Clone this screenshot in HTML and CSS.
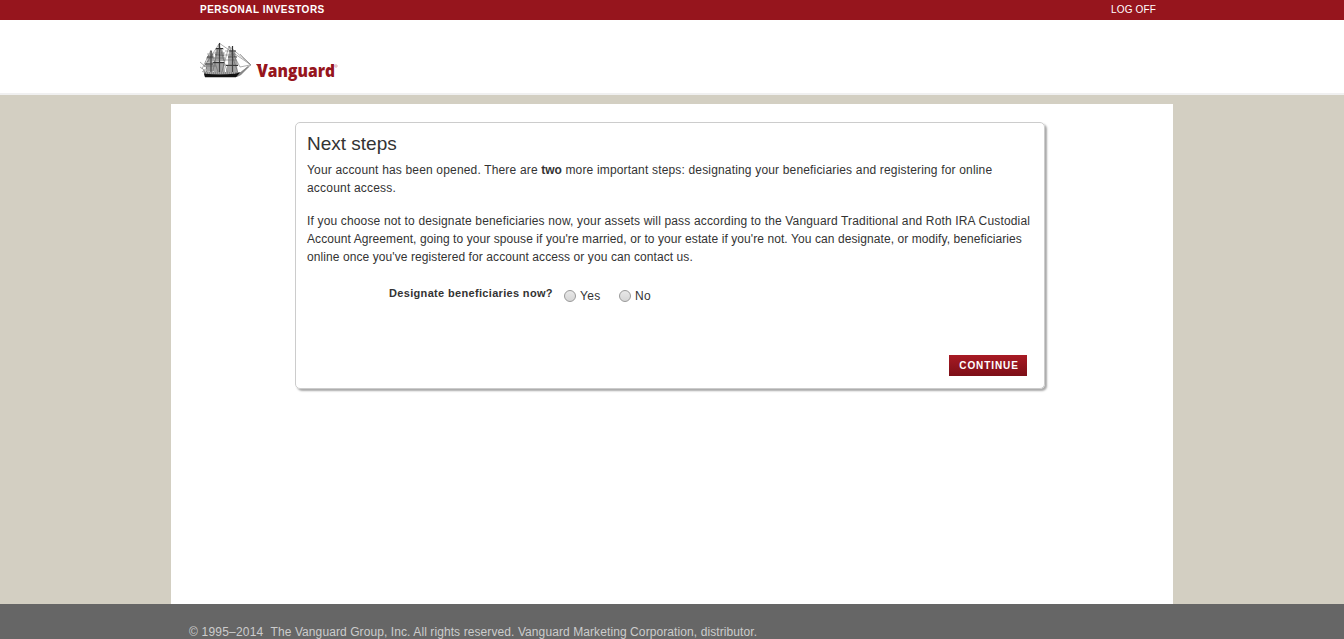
FILE: index.html
```html
<!DOCTYPE html>
<html lang="en">
<head>
<meta charset="utf-8">
<title>Vanguard - Next steps</title>
<link rel="stylesheet" href="styles.css">
</head>
<body>
<div class="topbar"><div class="topbar-inner"><span class="section">PERSONAL INVESTORS</span><a class="logoff">LOG OFF</a></div></div>
<header class="header">
<svg class="logo" width="150" height="52" viewBox="198 39 150 52" role="img" aria-label="Vanguard">
<g fill="none" stroke="#777" stroke-width=".6">
<path d="M219 43L251 65L237 75M229 46L251 65M211 50L202 69M219 44L204 67M219 44L212 75M229 46L221 75M219 44L228 75M229 46L239 76M211 50L219 75M240 54L250 64M229 46L240 67L250 65M200 62L207 68L202 72M200 67L207 72"/>
<path d="M207 54h7M206 58h9M205 62h10M204 66h12M215 49h9M214 53h11M214 58h11M213 63h12M225 51h9M224 55h11M224 60h12M223 65h13"/>
</g>
<g stroke="#333" fill="none">
<path stroke-width="1.2" d="M211 51V75M219.500 43V75M232.500 46V75"/>
<path stroke-width="1.200" d="M216 48.500h7M215 55h9M213 62.500h11M229 51h7M228 57h9M226 65.500h12M207 57h6M205 64h8"/>
</g>
<g fill="#555" opacity=".55"><path d="M208 55l5-1 1 7-7 1zM206 63l8-1 2 9-10 1zM216 49l6 0 2 5-9 1zM215 56l9-1 1 6-11 1zM214 63l10 0 1 9-11 1zM229 52l6-1 1 6-8 1zM228 58l8 0 2 7-10 1zM227 66l10 0 1 7-12 0z"/></g>
<path fill="#888" d="M203 70l3 2h35l7-6 1 1-8 8-4 2h-32z"/>
<path fill="#111" d="M204 73.500q15 2 32 0l4-1-4 4.800h-31z"/>
<path d="M206 73h30" stroke="#ddd" stroke-width=".7" stroke-dasharray="1 1"/>
<path class="wordmark-serif" d="M256 64h5v1.500h-4z"/>
<text class="wordmark" x="257" y="77" textLength="78" lengthAdjust="spacingAndGlyphs">Vanguard</text>
<circle cx="336" cy="66" r="1.200" fill="none" stroke="#d48c91" stroke-width=".7"/>
</svg>
</header>
<main class="page">
<section class="card">
<h1>Next steps</h1>
<p><span class="l1">Your account has been opened. There are <b>two</b> more important steps: designating your beneficiaries and registering for online</span><span class="l2">account access.</span></p>
<p><span class="l3">If you choose not to designate beneficiaries now, your assets will pass according to the Vanguard Traditional and Roth IRA Custodial</span><span class="l4">Account Agreement, going to your spouse if you're married, or to your estate if you're not. You can designate, or modify, beneficiaries</span><span class="l5">online once you've registered for account access or you can contact us.</span></p>
<div class="question"><span class="label">Designate beneficiaries now?</span><label class="choice"><i class="radio"></i><span>Yes</span></label><label class="choice"><i class="radio"></i><span>No</span></label></div>
<div class="actions"><button class="continue">CONTINUE</button></div>
</section>
</main>
<footer class="footer"><span class="years">© 1995–2014&nbsp; </span>The Vanguard Group, Inc. All rights reserved. Vanguard Marketing Corporation, distributor.</footer>
</body>
</html>
```
FILE: styles.css
```css
* { box-sizing: border-box; }
body { margin: 0; height: 639px; overflow: hidden; display: flex; flex-direction: column; background: #d3cfc2; font: 12px/18px "Liberation Sans", Arial, sans-serif; color: #333; }
.topbar { height: 20px; flex: none; background: #96151d; color: #fff; }
.topbar-inner { display: flex; justify-content: space-between; padding: 0 188px 0 200px; font-size: 10px; line-height: 19px; }
.section { font-weight: bold; letter-spacing: .5px; }
.logoff { letter-spacing: .15px; }
.header { height: 75px; flex: none; background: #fff; border-bottom: 2px solid #f0f0f0; padding: 19px 0 0 198px; }
.logo { display: block; overflow: visible; }
.wordmark { font: 800 17px "Open Sans", sans-serif; fill: #96151d; }
.wordmark-serif { fill: #96151d; }
.page { width: 1002px; height: 500px; flex: none; margin: 9px 0 0 171px; padding: 18px 0 0 124px; background: #fff; }
.card { width: 750px; height: 267px; padding: 11px 11px; border: 1px solid #ccc; border-radius: 5px; box-shadow: 2px 2px 2px #aaa; }
h1 { margin: 0 0 7px; font-size: 19px; line-height: 20px; font-weight: normal; }
p { margin: 0 0 15px; }
p span { display: block; width: max-content; white-space: nowrap; }
.l1 { letter-spacing: .168px; }
.l1 b { letter-spacing: 0; }
.l2 { letter-spacing: .2px; }
.l3 { letter-spacing: .158px; }
.l4 { letter-spacing: .08px; }
.l5 { letter-spacing: .085px; }
.question { display: flex; margin: 19px 0 0 82px; }
.label { width: 175px; font-size: 11px; font-weight: bold; white-space: nowrap; line-height: 17px; letter-spacing: .33px; }
.choice { display: flex; align-items: center; gap: 4px; margin-top: 1px; height: 20px; margin-right: 18.5px; letter-spacing: .3px; }
.radio { width: 12px; height: 12px; border: 1px solid #999; border-radius: 50%; background: linear-gradient(#e8e8e8, #d6d6d6); }
.actions { display: flex; justify-content: flex-end; padding: 49px 6px 0 0; }
.continue { width: 78px; height: 21px; border: 0; padding: 0 0 0 2px; background: linear-gradient(#a81a24, #7c0f17); color: #fff; font: bold 10px/21px "Liberation Sans", Arial, sans-serif; letter-spacing: .9px; }
.footer { height: 35px; flex: none; padding: 19px 0 0 189px; background: #666; color: #ccc; white-space: nowrap; letter-spacing: .09px; }
.years { letter-spacing: .2px; }
```
